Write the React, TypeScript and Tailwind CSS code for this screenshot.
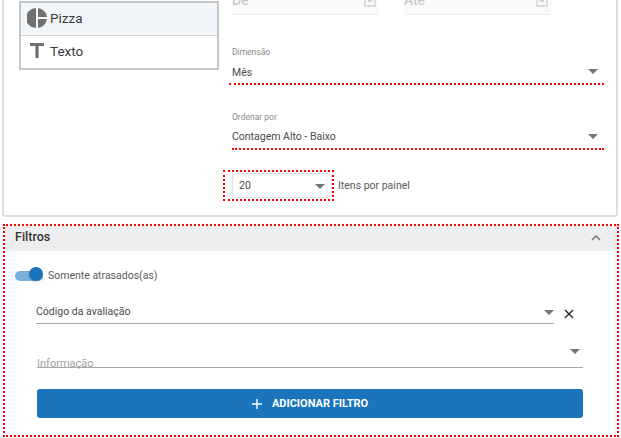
const roboto = "font-['Roboto',_sans-serif]";

function Caret({ className = "" }: { className?: string }) {
  return (
    <svg width="10" height="5" viewBox="0 0 10 5" className={className}>
      <path d="M0 0h10L5 5z" fill="#757575" />
    </svg>
  );
}

function DateField({ label }: { label: string }) {
  return (
    <div className="w-[147px] h-[31px] bg-[#fafafa] border-b border-[#eeeeee] flex items-center justify-between pr-[3px] pt-[2px]">
      <span className="text-[14px] text-[#c4c4c4]">{label}</span>
      <svg width="12" height="14" viewBox="0 0 12 14">
        <path d="M1 1h10v12H1z" fill="none" stroke="#cfcfcf" strokeWidth="1.3" />
        <path d="M4 5h4v4H4z" fill="#cfcfcf" />
      </svg>
    </div>
  );
}

function ChartRow({ icon, label, active }: { icon: React.ReactNode; label: string; active?: boolean }) {
  return (
    <div className={`h-[33px] pb-[2px] flex items-center pl-[6px] gap-[3px] ${active ? "bg-[#f1f6fb] border-b border-[#d4d4d4]" : "bg-white"}`}>
      <span className="w-[20px] flex justify-center">{icon}</span>
      <span className="text-[13.5px] text-[#3c3c3c]">{label}</span>
    </div>
  );
}

export default function App() {
  return (
    <div className={`w-[621px] h-[438px] overflow-hidden bg-white ${roboto}`}>
      <div className="-mt-[16px]">
        {/* Painel superior */}
        <section className="ml-[2px] w-[616px] h-[233px] border-x-2 border-b-2 border-[#dedede] rounded-b-[3px] flex">
          <div className="ml-[15px] mt-[17px] w-[200px] h-[69px] border-2 border-[#c6c6c6] flex flex-col">
            <ChartRow
              active
              label="Pizza"
              icon={
                <svg width="20" height="20" viewBox="0 0 20 20">
                  <path d="M9 0v20A10 10 0 0 1 9 0z" fill="#707070" />
                  <path d="M11 0a10 10 0 0 1 9 9h-9z" fill="#707070" />
                  <path d="M11 11h9a10 10 0 0 1-9 9z" fill="#707070" />
                </svg>
              }
            />
            <ChartRow
              label="Texto"
              icon={
                <svg width="14" height="15" viewBox="0 0 14 15">
                  <path d="M0 0h14v3H8.6v12H5.4V3H0z" fill="#707070" />
                </svg>
              }
            />
          </div>

          <div className="ml-[13px] flex-1 flex flex-col">
            <div className="flex gap-[25px]">
              <DateField label="De" />
              <DateField label="Até" />
            </div>

            <div className="mt-[31px] relative w-[372px] h-[37px]">
              <div className="text-[8.5px] leading-[12px] text-[#8a8a8a]">Dimensão</div>
              <div className="mt-[7px] text-[10.5px] leading-[16px] text-[#4a4a4a]">Mês</div>
              <Caret className="absolute right-[6px] top-[23px]" />
            </div>
            <div className="-ml-[3px] w-[375px] border-b-[2px] border-dotted border-[#ff0000]" />

            <div className="mt-[26px] relative w-[372px] h-[37px]">
              <div className="text-[8.5px] leading-[12px] text-[#8a8a8a]">Ordenar por</div>
              <div className="mt-[6px] text-[10.5px] leading-[16px] text-[#4a4a4a]">Contagem Alto - Baixo</div>
              <Caret className="absolute right-[6px] top-[23px]" />
            </div>
            <div className="w-[372px] border-b-[2px] border-dotted border-[#ff0000]" />

            <div className="mt-[20px] flex items-center">
              <div className="-ml-[9px] w-[111px] h-[31px] border-[2px] border-dotted border-[#ff0000] pl-[7px] pt-[1px]">
                <div className="w-[100px] h-[25px] pt-[1px] border border-[#e2e2e2] rounded-[4px] flex items-center justify-between pl-[6px] pr-[6px]">
                  <span className="text-[10.5px] text-[#4a4a4a]">20</span>
                  <Caret />
                </div>
              </div>
              <span className="ml-[4px] text-[10.5px] text-[#5a5a5a]">Itens por painel</span>
            </div>
          </div>
        </section>

        {/* Filtros */}
        <section className="mt-[7px] ml-[3px] w-[616px] h-[213px] border-[2px] border-dotted border-[#ff0000]">
          <div className="h-[25px] pb-[2px] bg-[#eeeeee] flex items-center justify-between pl-[10px] pr-[16px]">
            <span className="text-[12.5px] font-medium text-[#333333]">Filtros</span>
            <svg width="10" height="6" viewBox="0 0 10 6">
              <path d="M1 5l4-4 4 4" fill="none" stroke="#757575" strokeWidth="1.5" />
            </svg>
          </div>

          <div className="mt-[17px] h-[16px] flex items-center pl-[10px]">
            <div className="relative w-[28px] h-[10px] rounded-full bg-[#7aaedb]">
              <span className="absolute right-0 -top-[4px] w-[14px] h-[14px] rounded-full bg-[#1b75bc] shadow" />
            </div>
            <span className="ml-[5px] text-[10.5px] text-[#5a5a5a]">Somente atrasados(as)</span>
          </div>

          <div className="mt-[16px] ml-[31px] flex items-start">
            <div className="relative w-[518px] h-[24px] pt-[3px] border-b border-[#a8a8a8]">
              <span className="block text-[10.5px] leading-[18px] text-[#4a4a4a]">Código da avaliação</span>
              <Caret className="absolute right-[0px] top-[10px]" />
            </div>
            <svg width="10" height="10" viewBox="0 0 10 10" className="ml-[10px] mt-[9px]">
              <path d="M1 1l8 8M9 1L1 9" stroke="#222222" strokeWidth="1.4" />
            </svg>
          </div>

          <div className="mt-[19px] ml-[32px] relative w-[546px] h-[25px] border-b border-[#a8a8a8]">
            <span className="absolute left-0 bottom-[-5px] text-[11px] text-[#a2a2a2]">Informação</span>
            <Caret className="absolute right-[3px] top-[6px]" />
          </div>

          <button className="mt-[21px] ml-[32px] w-[546px] h-[29px] bg-[#1b75bc] rounded-[3px] flex items-center justify-center gap-[10px] text-white">
            <svg width="10" height="10" viewBox="0 0 10 10">
              <path d="M5 0v10M0 5h10" stroke="#ffffff" strokeWidth="1.4" />
            </svg>
            <span className="pt-[1px] text-[11px] font-bold">ADICIONAR FILTRO</span>
          </button>
        </section>
      </div>
    </div>
  );
}
